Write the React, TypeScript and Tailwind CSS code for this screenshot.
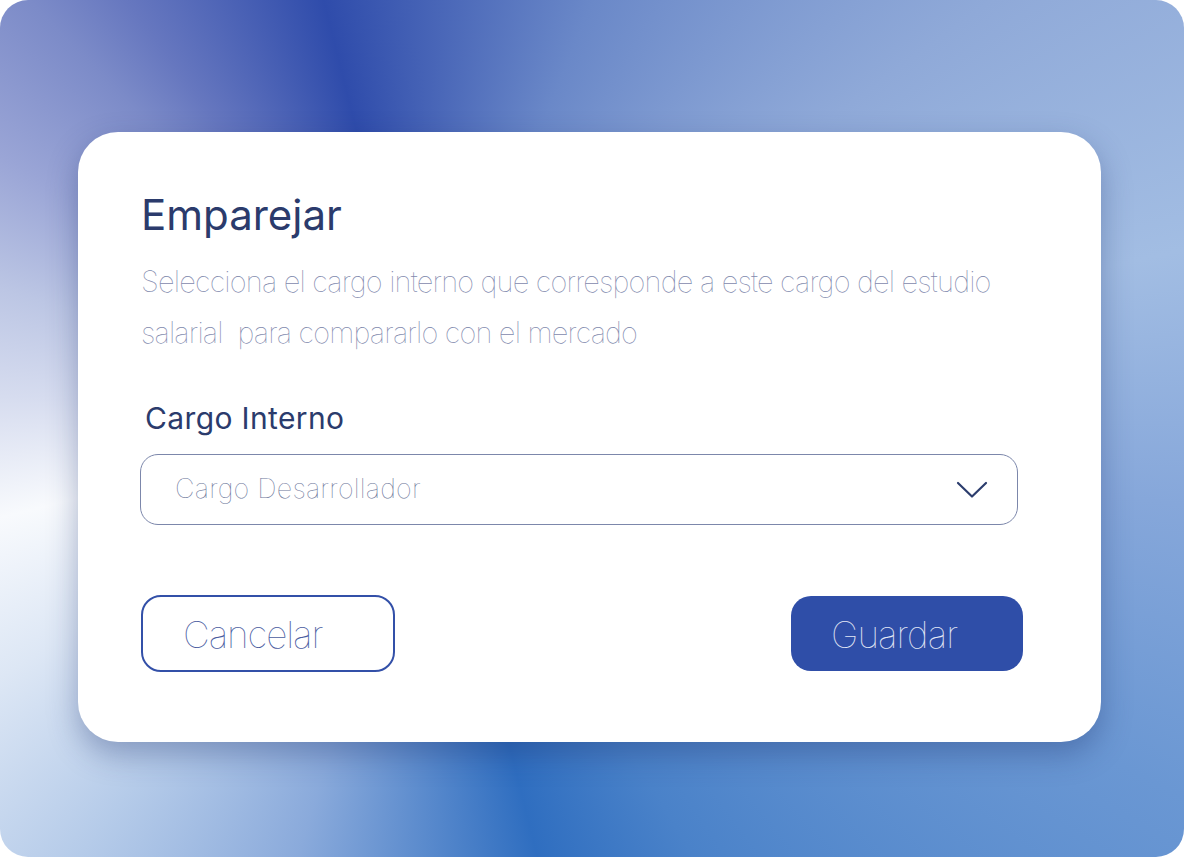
import React from 'react'

const ChevronDown = () => (
  <svg width="32" height="18" viewBox="0 0 32 18" fill="none">
    <path d="M2 2 L16 15.5 L30 2" stroke="#2c3d6d" strokeWidth="2.2" strokeLinecap="round" strokeLinejoin="round" />
  </svg>
)

const App = () => {
  return (
    <div className="w-[1184px] h-[858px] bg-white font-['Inter',_'Noto_Sans',_sans-serif]">
      <div className="h-[857px] rounded-[28px] overflow-hidden pt-[132px] pl-[78px] bg-[conic-gradient(from_0deg_at_36%_48%,#4663b6_0deg,#6a88c8_22deg,#8fa9d8_54deg,#a2bde3_78deg,#86a7da_97deg,#6a97d3_117deg,#4a82c9_149deg,#2f6ec0_166deg,#8aaadb_196deg,#b5cbe9_218deg,#dde7f5_238deg,#f8fafd_256deg,#d6dcef_272deg,#bcc6e4_286deg,#9aa5d6_301deg,#7c8bc8_316deg,#6677bf_324deg,#2f4cab_346deg,#4663b6_360deg)]">
        {/* Card */}
        <div className="w-[1023px] h-[610px] bg-white rounded-[40px] shadow-[0_12px_30px_rgba(30,50,110,0.35)] pt-[59px] pl-[62px]">
          <div className="w-[884px]">
            <h1 className="ml-[1px] text-[42px] leading-[48px] font-normal text-[#2b3b6c]">Emparejar</h1>
            <p className="ml-[1px] mt-[17px] text-[29px] leading-[51px] font-thin text-[#7f89ad] tracking-[-0.028em]">
              Selecciona el cargo interno que corresponde a este cargo del estudio salarial&nbsp; para compararlo con el mercado
            </p>

            <label className="block mt-[42px] ml-[5px] text-[30px] leading-[36px] font-normal text-[#2b3b6c] tracking-[0.012em]">Cargo Interno</label>

            <div className="mt-[18px] w-[878px] h-[71px] border border-[#7c87ab] rounded-[18px] flex items-center justify-between pl-[34px] pr-[29px]">
              <span className="text-[27px] font-thin text-[#6b7599] tracking-[0.008em]">Cargo Desarrollador</span>
              <ChevronDown />
            </div>

            <div className="mt-[70px] flex justify-between items-start">
              <button className="ml-[1px] w-[254px] h-[77px] border-2 border-[#3350a8] rounded-[20px] text-left pl-[40px] pt-[2px] text-[37px] font-thin text-[#4a5c9f] tracking-[-0.03em]">
                Cancelar
              </button>
              <button className="mt-[1px] mr-[1px] w-[232px] h-[75px] bg-[#2f4ea8] rounded-[20px] text-left pl-[40px] pt-[2px] text-[37px] font-thin text-[#e3e8f6] tracking-[-0.025em]">
                Guardar
              </button>
            </div>
          </div>
        </div>
      </div>
    </div>
  )
}

export default App
